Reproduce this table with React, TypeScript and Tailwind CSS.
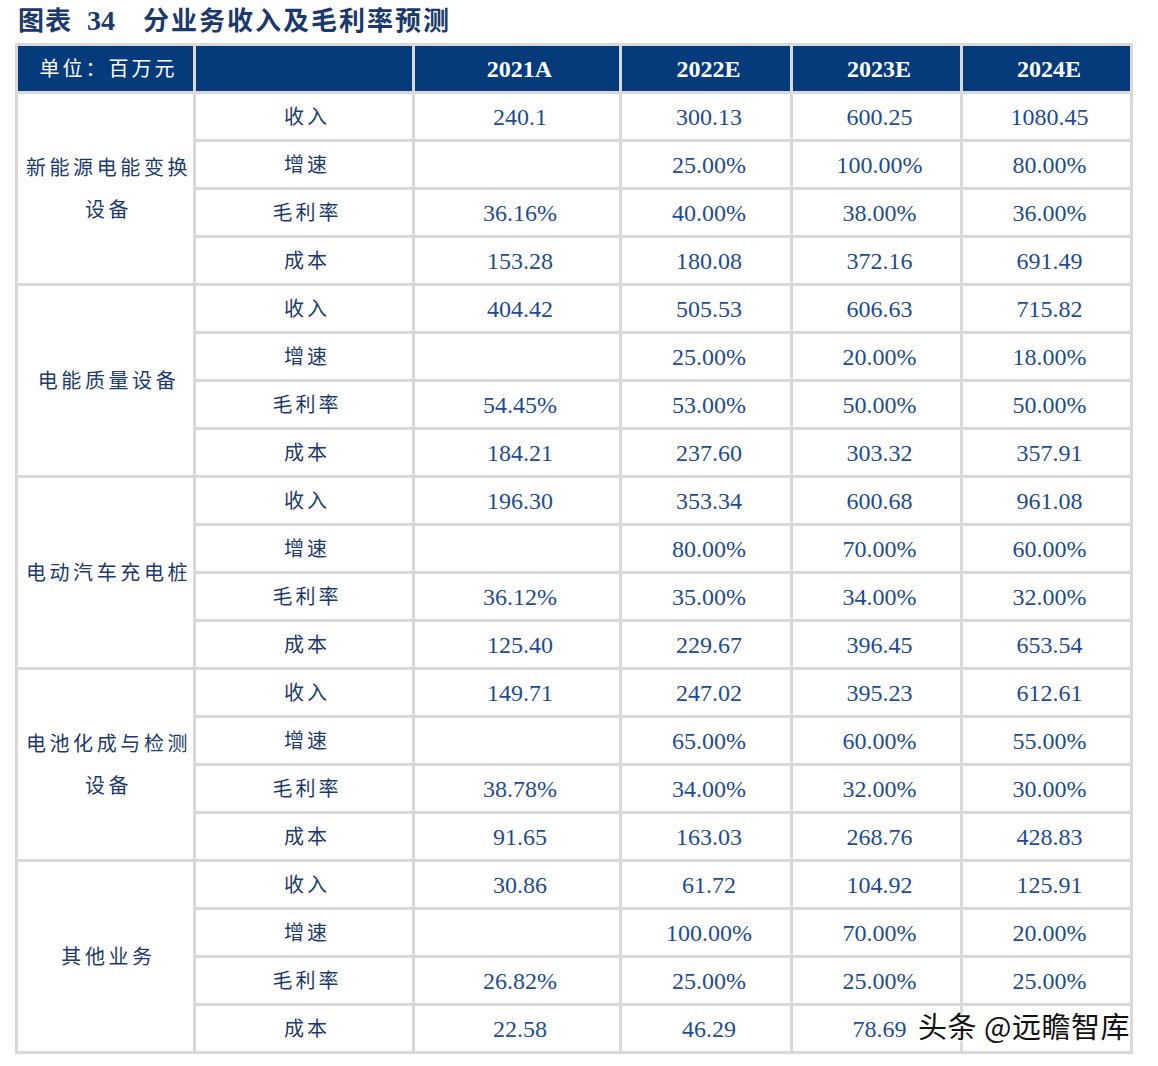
const groups = [
  {
    name: '新能源电能变换设备',
    rows: [
      ['收入', '240.1', '300.13', '600.25', '1080.45'],
      ['增速', '', '25.00%', '100.00%', '80.00%'],
      ['毛利率', '36.16%', '40.00%', '38.00%', '36.00%'],
      ['成本', '153.28', '180.08', '372.16', '691.49'],
    ],
  },
  {
    name: '电能质量设备',
    rows: [
      ['收入', '404.42', '505.53', '606.63', '715.82'],
      ['增速', '', '25.00%', '20.00%', '18.00%'],
      ['毛利率', '54.45%', '53.00%', '50.00%', '50.00%'],
      ['成本', '184.21', '237.60', '303.32', '357.91'],
    ],
  },
  {
    name: '电动汽车充电桩',
    rows: [
      ['收入', '196.30', '353.34', '600.68', '961.08'],
      ['增速', '', '80.00%', '70.00%', '60.00%'],
      ['毛利率', '36.12%', '35.00%', '34.00%', '32.00%'],
      ['成本', '125.40', '229.67', '396.45', '653.54'],
    ],
  },
  {
    name: '电池化成与检测设备',
    rows: [
      ['收入', '149.71', '247.02', '395.23', '612.61'],
      ['增速', '', '65.00%', '60.00%', '55.00%'],
      ['毛利率', '38.78%', '34.00%', '32.00%', '30.00%'],
      ['成本', '91.65', '163.03', '268.76', '428.83'],
    ],
  },
  {
    name: '其他业务',
    rows: [
      ['收入', '30.86', '61.72', '104.92', '125.91'],
      ['增速', '', '100.00%', '70.00%', '20.00%'],
      ['毛利率', '26.82%', '25.00%', '25.00%', '25.00%'],
      ['成本', '22.58', '46.29', '78.69', ''],
    ],
  },
];

const years = ['2021A', '2022E', '2023E', '2024E'];

const cjk = "font-['Liberation_Serif','Noto_Sans_CJK_SC',serif]";

export default function App() {
  return (
    <div className="relative w-[1158px] h-[1066px] bg-white overflow-hidden">
      {/* Title */}
      <div className={`h-[43px] pl-[18px] flex items-center pb-[1px] text-[#1b3a6b] font-bold ${cjk}`}>
        <span className="text-[26px] tracking-[1px]">图表</span>
        <span className="text-[28px] ml-[15px]">34</span>
        <span className="text-[26px] tracking-[2px] ml-[28px]">分业务收入及毛利率预测</span>
      </div>

      {/* Table */}
      <div className="ml-[15px] w-[1118px] grid grid-cols-[175px_216px_204px_168px_167px_167px] auto-rows-[45px] gap-[3px] p-[3px] bg-[#d9d9d9]">
        <div className={`bg-[#063b7b] flex items-center justify-center pl-[6px] text-white text-[20px] tracking-[3px] ${cjk}`}>
          单位：百万元
        </div>
        <div className="bg-[#063b7b]" />
        {years.map((y) => (
          <div
            key={y}
            className="bg-[#063b7b] flex items-center justify-center pl-[5px] pt-[1px] text-white font-bold text-[24px] font-['Liberation_Serif',serif]"
          >
            {y}
          </div>
        ))}

        {groups.map((g) => (
          <>
            <div
              key={g.name}
              className={`row-span-4 bg-white flex items-center justify-center text-center pl-[6px] text-[#1c3a6e] text-[20px] tracking-[3.6px] leading-[42px] ${cjk}`}
            >
              {g.name}
            </div>
            {g.rows.map((r, i) => (
              <>
                <div
                  key={g.name + i}
                  className={`bg-white flex items-center justify-center pl-[6px] text-[#1c3a6e] text-[20px] tracking-[3px] ${cjk}`}
                >
                  {r[0]}
                </div>
                {r.slice(1).map((v, j) => (
                  <div
                    key={g.name + i + '-' + j}
                    className="bg-white flex items-center justify-center pl-[6px] text-[#1d4c92] text-[24px] font-['Liberation_Serif',serif]"
                  >
                    {v}
                  </div>
                ))}
              </>
            ))}
          </>
        ))}
      </div>

      {/* Watermark */}
      <div className="absolute left-[918px] top-[1004px] text-[29px] tracking-[0.5px] text-[#111] font-['Noto_Sans_CJK_SC',sans-serif] whitespace-nowrap [text-shadow:0_0_2px_#fff,0_0_2px_#fff,0_0_3px_#fff]">
        头条 @远瞻智库
      </div>
    </div>
  );
}
